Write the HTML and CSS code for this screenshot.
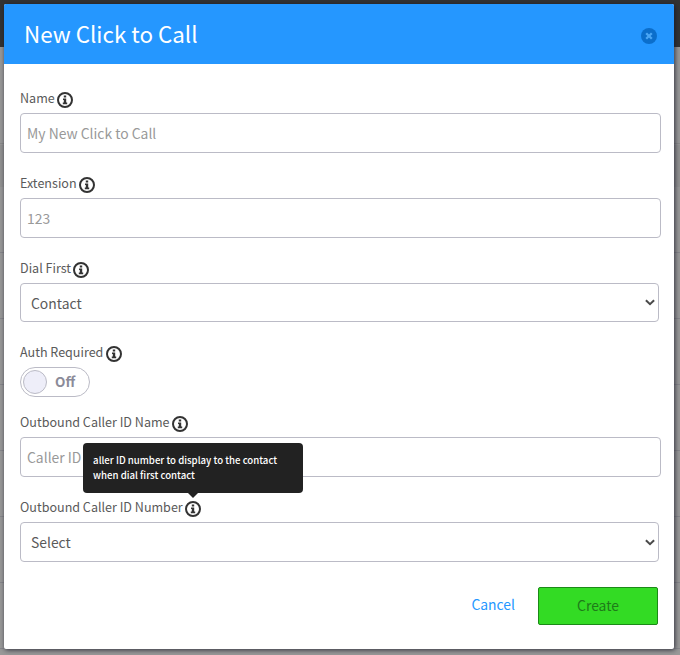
FILE: index.html
```html
<!DOCTYPE html>
<html lang="en">
<head>
<meta charset="utf-8">
<title>New Click to Call</title>
<link rel="stylesheet" href="styles.css">
</head>
<body>
<svg class="defs" aria-hidden="true">
  <symbol id="info" viewBox="0 0 16 16">
    <circle cx="8" cy="8" r="7" fill="none" stroke="#333" stroke-width="2"/>
    <path fill="#333" d="M6.8 3.5h2.4v2H6.8zM6 6.4h3.2v4.2h1v1.7H5.8v-1.7h1V8H6z"/>
  </symbol>
  <symbol id="chevron" viewBox="0 0 10 7">
    <path fill="none" stroke="#4a4a4a" stroke-width="2" d="M.9 1.2 5 5.2 9.1 1.2"/>
  </symbol>
</svg>
<div class="modal">
  <header class="modal-header">
    <h1 class="title">New Click to Call</h1>
    <svg class="close" viewBox="0 0 16 16"><circle cx="8" cy="8" r="8" fill="#0b6ecb"/><path d="m5.2 5.2 5.6 5.6m0-5.6-5.6 5.6" stroke="#4aa6f5" stroke-width="2.3"/></svg>
  </header>
  <main class="form">
    <section class="field">
      <div class="label"><span>Name</span><svg class="info"><use href="#info"/></svg></div>
      <div class="control placeholder">My New Click to Call</div>
    </section>
    <section class="field">
      <div class="label"><span>Extension</span><svg class="info"><use href="#info"/></svg></div>
      <div class="control placeholder">123</div>
    </section>
    <section class="field">
      <div class="label"><span>Dial First</span><svg class="info"><use href="#info"/></svg></div>
      <div class="control select short"><span>Contact</span><svg class="chevron"><use href="#chevron"/></svg></div>
    </section>
    <section class="field auth">
      <div class="label"><span>Auth Required</span><svg class="info"><use href="#info"/></svg></div>
      <div class="toggle"><span class="knob"></span><span class="state">Off</span></div>
    </section>
    <section class="field">
      <div class="label"><span>Outbound Caller ID Name</span><svg class="info"><use href="#info"/></svg></div>
      <div class="control placeholder">Caller ID</div>
    </section>
    <section class="field">
      <div class="label"><span>Outbound Caller ID Number</span><span class="tip-anchor"><svg class="info"><use href="#info"/></svg><span class="tooltip">aller ID number to display to the contact<br>when dial first contact</span></span></div>
      <div class="control select"><span>Select</span><svg class="chevron"><use href="#chevron"/></svg></div>
    </section>
  </main>
  <footer class="actions">
    <span class="cancel">Cancel</span>
    <span class="create">Create</span>
  </footer>
</div>
</body>
</html>
```
FILE: styles.css
```css
* { box-sizing: border-box; }
body {
  margin: 0;
  height: 655px;
  padding: 4px 6px 6px 4px;
  overflow: hidden;
  font-family: "Noto Sans CJK SC", sans-serif;
  color: #5a5a5a;
  background:
    linear-gradient(#333 0 47px, transparent 47px),
    linear-gradient(#999 0 143px, #8b8b8b 143px 144px, #999 144px 145px, #929292 145px 187px, transparent 187px),
    repeating-linear-gradient(transparent 0 54px, #87878b 54px 55px, transparent 55px 66px),
    #999;
}
.defs { position: absolute; width: 0; height: 0; }
.modal {
  height: 645px;
  background: #fff;
  border-radius: 2px;
  box-shadow: 1px 1px 5px rgba(20, 20, 35, .8);
}
.modal-header {
  height: 60px;
  padding: 0 17px 0 20px;
  display: flex;
  align-items: center;
  justify-content: space-between;
  background: #2597ff;
  border-radius: 2px 2px 0 0;
}
.title { margin: 0 0 3px; font-size: 22.4px; font-weight: 400; line-height: 30px; color: #fff; }
.close { width: 16px; height: 16px; margin-top: 4px; }
.form { padding: 21px 13px 0 16px; }
.field { margin-bottom: 17px; }
.field.auth { margin-bottom: 12px; }
.label { height: 28px; display: flex; align-items: center; gap: 2.4px; font-size: 12.55px; line-height: 20px; white-space: nowrap; }
.label > span:first-child { margin-bottom: 2px; }
.info { display: block; width: 16px; height: 16px; position: relative; top: 1px; }
.control {
  height: 40px;
  padding: 0 6px;
  display: flex;
  align-items: center;
  border: 1px solid #bbbbc6;
  border-radius: 4px;
  font-size: 13.9px;
  line-height: 20px;
}
.placeholder { color: #999; }
.select { margin-right: 2px; padding: 0 3px 0 10px; justify-content: space-between; }
.short { height: 39px; }
.chevron { width: 10px; height: 7px; }
.toggle {
  width: 70px;
  height: 30px;
  padding: 0 2px;
  display: flex;
  align-items: center;
  gap: 8px;
  border: 1px solid #bbbbc6;
  border-radius: 15px;
  color: #8b8b99;
  font-size: 13.5px;
  font-weight: 700;
}
.knob { width: 24px; height: 24px; border: 1px solid #bbbbc6; border-radius: 50%; background: #eeeef9; }
.state { margin-bottom: 2px; }
.tip-anchor { position: relative; }
.tooltip {
  position: absolute;
  left: -102px;
  bottom: 23px;
  width: 220px;
  height: 50px;
  padding: 10px;
  border-radius: 4px;
  background: #222;
  color: #fff;
  font-size: 9.65px;
  font-weight: 500;
  line-height: 15px;
}
.tooltip::after {
  content: "";
  position: absolute;
  left: 105px;
  top: 50px;
  border: 5px solid transparent;
  border-top-color: #222;
  border-bottom: 0;
}
.actions { display: flex; justify-content: flex-end; align-items: center; gap: 23px; padding: 8px 16px 0 0; font-size: 13.9px; }
.cancel { color: #2597ff; line-height: 20px; margin-top: -5px; }
.create {
  width: 120px;
  height: 38px;
  border: 1px solid #1b8a17;
  border-radius: 2px;
  background: #33db24;
  color: #1f7a1a;
  line-height: 34px;
  text-align: center;
}
```
